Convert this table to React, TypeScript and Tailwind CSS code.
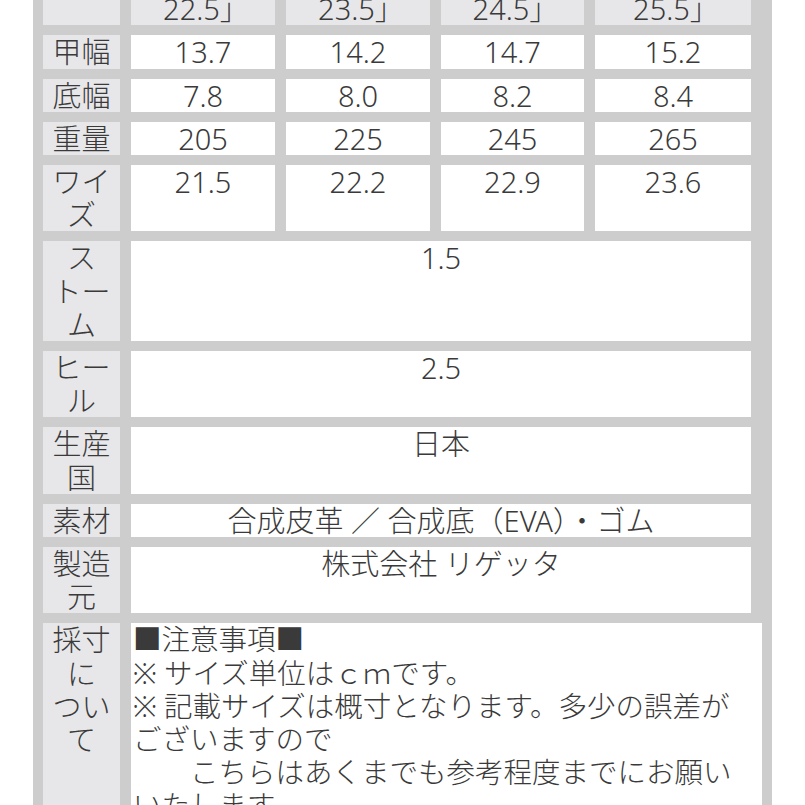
import * as React from "react"

const font = { fontFamily: '"Noto Sans", "Noto Sans CJK JP", sans-serif' }

const sizes = [
  ["「22.0～", "22.5」"],
  ["「23.0～", "23.5」"],
  ["「24.0～", "24.5」"],
  ["「25.0～", "25.5」"],
]

const rows: { label: string[]; values: string[] }[] = [
  { label: ["甲幅"], values: ["13.7", "14.2", "14.7", "15.2"] },
  { label: ["底幅"], values: ["7.8", "8.0", "8.2", "8.4"] },
  { label: ["重量"], values: ["205", "225", "245", "265"] },
  { label: ["ワイ", "ズ"], values: ["21.5", "22.2", "22.9", "23.6"] },
]

const merged: { label: string[]; value: string }[] = [
  { label: ["ス", "トー", "ム"], value: "1.5" },
  { label: ["ヒー", "ル"], value: "2.5" },
  { label: ["生産", "国"], value: "日本" },
  { label: ["素材"], value: "合成皮革 ／ 合成底（EVA）・ゴム" },
  { label: ["製造", "元"], value: "株式会社 リゲッタ" },
]

const notes = [
  "■注意事項■",
  "※ サイズ単位はｃｍです。",
  "※ 記載サイズは概寸となります。多少の誤差が",
  "ございますので",
  "　　こちらはあくまでも参考程度までにお願い",
  "いたします。",
  "",
]

function Label({ lines }: { lines: string[] }) {
  return (
    <div className="bg-[#e7e7e9] text-center">
      {lines.map((l, i) => (
        <div key={i}>{l}</div>
      ))}
    </div>
  )
}

export default function App() {
  return (
    <div className="h-[805px] w-[805px] overflow-hidden bg-white" style={font}>
      <div className="ml-[33px] w-[739px] bg-[#cdcdcd] pl-[10px] pr-[21px] pb-[40px] -mt-[41px] text-[29px] font-light leading-[33.2px] text-[#3a3a3a]">
        <div className="grid grid-cols-[77px_144px_144px_143px_156px] gap-x-[11px] gap-y-[10px]">
          {/* header */}
          <div className="bg-[#e7e7e9]" />
          {sizes.map((s, i) => (
            <div key={i} className="bg-[#e7e7e9] text-center">
              <div>{s[0]}</div>
              <div className="pl-[6px]">{s[1]}</div>
            </div>
          ))}

          {rows.map((r) => (
            <React.Fragment key={r.label.join("")}>
              <Label lines={r.label} />
              {r.values.map((v, i) => (
                <div key={i} className="bg-white text-center">
                  {v}
                </div>
              ))}
            </React.Fragment>
          ))}

          {merged.map((m) => (
            <React.Fragment key={m.label.join("")}>
              <Label lines={m.label} />
              <div className="col-span-4 bg-white text-center whitespace-nowrap">
                {m.value}
              </div>
            </React.Fragment>
          ))}

          <Label lines={["採寸", "に", "つい", "て"]} />
          <div className="col-span-4 -mr-[11px] bg-white pl-[2px] text-[28.5px] whitespace-pre">
            {notes.map((n, i) => (
              <div key={i}>{n || "\u00a0"}</div>
            ))}
          </div>
        </div>
      </div>
    </div>
  )
}
